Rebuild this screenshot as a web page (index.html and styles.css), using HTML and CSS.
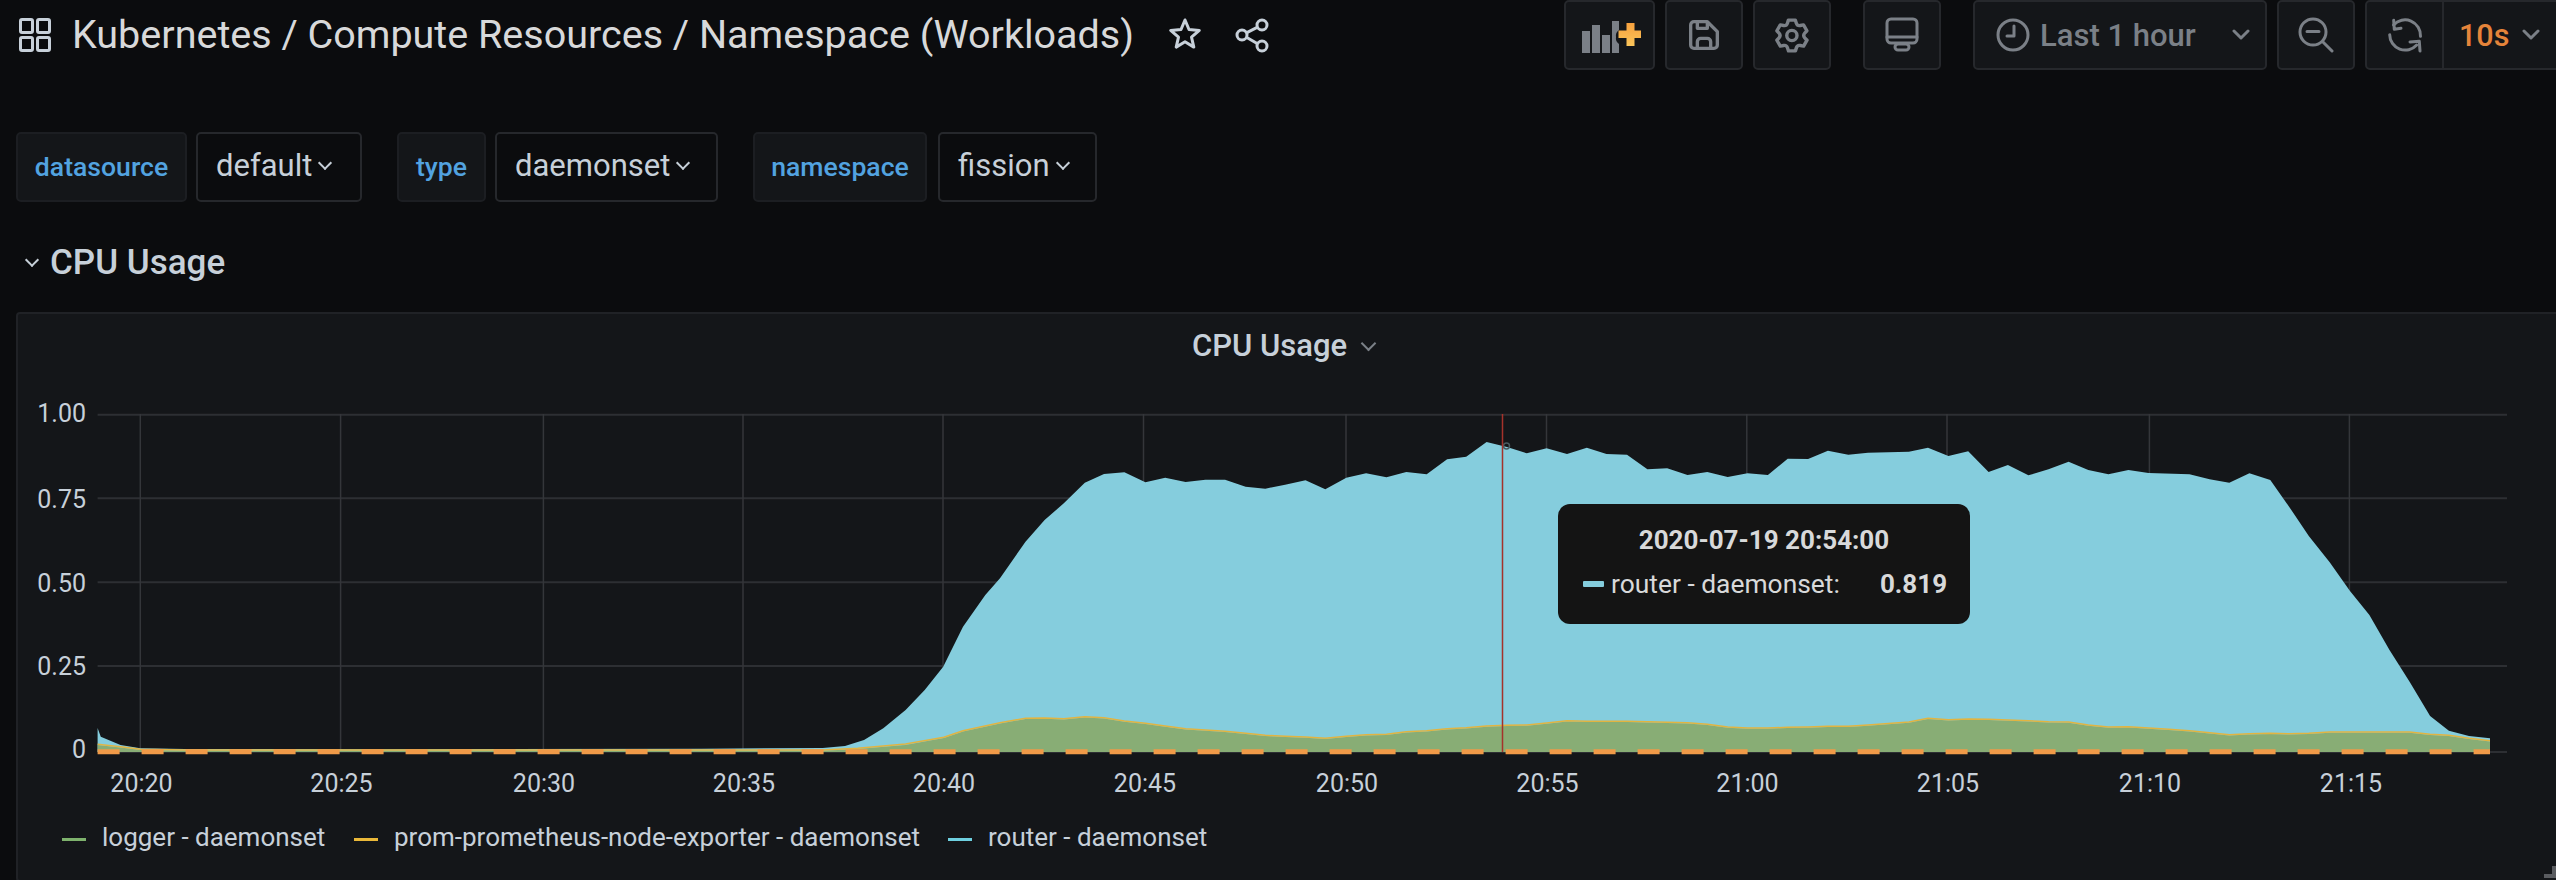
FILE: index.html
```html
<!DOCTYPE html>
<html lang="en">
<head>
    <meta charset="UTF-8">
    <title>Kubernetes / Compute Resources / Namespace (Workloads)</title>
    <link rel="stylesheet" href="styles.css">
</head>
<body>
    <header class="topbar">
        <div class="title-group">
            <svg class="icon-grid" width="34" height="36" viewBox="0 0 34 36"><rect x="2.5" y="2.5" width="12" height="13" rx="1.5"/><rect x="19.5" y="2.5" width="12" height="13" rx="1.5"/><rect x="2.5" y="20.5" width="12" height="13" rx="1.5"/><rect x="19.5" y="20.5" width="12" height="13" rx="1.5"/></svg>
            <h1 class="title">Kubernetes / Compute Resources / Namespace (Workloads)</h1>
            <svg class="icon-star" width="36" height="36" viewBox="0 0 36 36"><polygon points="18,3 22,12.5 32.3,13.4 24.5,20.1 26.8,30.1 18,24.8 9.2,30.1 11.5,20.1 3.7,13.4 14,12.5"/></svg>
            <svg class="icon-share" width="36" height="36" viewBox="0 0 36 36"><circle cx="28" cy="8" r="5"/><circle cx="8" cy="18" r="5"/><circle cx="28" cy="29" r="5"/><path d="M12.4 15.8 23.6 10.2M12.4 20.2 23.6 26.8"/></svg>
        </div>
        <div class="toolbar">
            <button class="btn btn-add" type="button">
                <svg width="62" height="36" viewBox="0 0 62 36">
                    <defs><linearGradient id="plusFill" x1="0" y1="0" x2="0" y2="1"><stop offset="0" stop-color="#f7a13e"/><stop offset="1" stop-color="#fbc55a"/></linearGradient></defs>
                    <path class="bars" d="M3 14h8v22H3zM13 8h8v28h-8zM23 18h8v18h-8zM33 4h7v9a7 7 0 0 0-3 7a7 7 0 0 0 3 7v9h-7z"/>
                    <path fill="url(#plusFill)" d="M47.500 6h8v7.500h7v7.500h-7v8h-8v-8h-8v-7.500h8z"/>
                </svg>
            </button>
            <button class="btn btn-save" type="button">
                <svg width="40" height="40" viewBox="0 0 24 24"><path d="M20.710 9.290l-6-6a1 1 0 0 0-.32-.21A1.090 1.090 0 0 0 14 3H6A3 3 0 0 0 3 6V18a3 3 0 0 0 3 3H18a3 3 0 0 0 3-3V10A1 1 0 0 0 20.710 9.290ZM9 5h4V7H9Zm6 14H9V16a1 1 0 0 1 1-1h4a1 1 0 0 1 1 1Zm4-1a1 1 0 0 1-1 1H17V16a3 3 0 0 0-3-3H10a3 3 0 0 0-3 3v3H6a1 1 0 0 1-1-1V6A1 1 0 0 1 6 5H7V8A1 1 0 0 0 8 9h6a1 1 0 0 0 1-1V6.410l4 4Z"/></svg>
            </button>
            <button class="btn btn-gear" type="button">
                <svg width="41" height="41" viewBox="0 0 24 24"><path d="M19.900 12.660a1 1 0 0 1 0-1.320L21.180 9.900a1 1 0 0 0 .12-1.170l-2-3.460a1 1 0 0 0-1.070-.48l-1.880.38a1 1 0 0 1-1.150-.66l-.61-1.830A1 1 0 0 0 13.640 2h-4a1 1 0 0 0-1 .68L8.080 4.510a1 1 0 0 1-1.150.66L5 4.790A1 1 0 0 0 4 5.270L2 8.730A1 1 0 0 0 2.100 9.900l1.270 1.440a1 1 0 0 1 0 1.320L2.100 14.100A1 1 0 0 0 2 15.270l2 3.460a1 1 0 0 0 1.070.48l1.880-.38a1 1 0 0 1 1.150.66l.61 1.830a1 1 0 0 0 1 .68h4a1 1 0 0 0 .95-.68l.61-1.830a1 1 0 0 1 1.150-.66l1.880.38a1 1 0 0 0 1.070-.48l2-3.460a1 1 0 0 0-.12-1.170ZM18.410 14l.8.9-1.280 2.220-1.180-.24a3 3 0 0 0-3.450 2L12.920 20H10.360L10 18.860a3 3 0 0 0-3.450-2l-1.180.24L4.070 14.890l.8-.9a3 3 0 0 0 0-4l-.8-.9L5.350 6.890l1.180.24a3 3 0 0 0 3.450-2L10.360 4h2.560l.38 1.140a3 3 0 0 0 3.450 2l1.180-.24 1.280 2.220-.8.9A3 3 0 0 0 18.410 14ZM11.640 8a4 4 0 1 0 4 4A4 4 0 0 0 11.640 8Zm0 6a2 2 0 1 1 2-2A2 2 0 0 1 11.640 14Z"/></svg>
            </button>
            <button class="btn btn-monitor" type="button">
                <svg class="line-icon" width="36" height="36" viewBox="0 0 36 36"><rect x="3" y="2" width="30" height="24" rx="4"/><path d="M3 20h30"/><rect x="11" y="27" width="14" height="6" rx="3"/></svg>
            </button>
            <button class="btn btn-time" type="button">
                <svg class="line-icon" width="36" height="36" viewBox="0 0 36 36"><circle cx="18" cy="18" r="15"/><path d="M19 9v10h-7"/></svg>
                <span class="time-label">Last 1 hour</span>
                <svg class="line-icon chevron-icon" width="18" height="12" viewBox="0 0 18 12"><path d="M2 2l7 7 7-7"/></svg>
            </button>
            <button class="btn btn-zoom" type="button">
                <svg class="line-icon" width="36" height="36" viewBox="0 0 36 36"><circle cx="15" cy="15" r="13"/><path d="M9 14.500h12M25 25l9 9"/></svg>
            </button>
            <div class="btn-group">
                <button class="btn-part btn-refresh" type="button">
                    <svg class="line-icon" width="36" height="36" viewBox="0 0 36 36"><path d="M6.500 8A15.500 15.500 0 0 1 33.500 19.300M2.700 17.700A15.500 15.500 0 0 0 29.700 28"/><path d="M6.700 3.300 7.300 12.300 14 11.300M33 34 32.300 24.300 23 25"/></svg>
                </button>
                <button class="btn-part btn-interval" type="button">
                    <span class="interval-label">10s</span>
                    <svg class="line-icon chevron-icon" width="18" height="12" viewBox="0 0 18 12"><path d="M2 2l7 7 7-7"/></svg>
                </button>
            </div>
        </div>
    </header>

    <div class="variables">
        <div class="variable">
            <span class="var-label var-datasource">datasource</span>
            <span class="var-value var-default">default<i class="caret"></i></span>
        </div>
        <div class="variable">
            <span class="var-label var-type">type</span>
            <span class="var-value var-daemonset">daemonset<i class="caret"></i></span>
        </div>
        <div class="variable">
            <span class="var-label var-namespace">namespace</span>
            <span class="var-value var-fission">fission<i class="caret"></i></span>
        </div>
    </div>

    <div class="row-title"><i class="caret"></i><span>CPU Usage</span></div>

    <section class="panel">
        <div class="panel-title"><span>CPU Usage</span><i class="caret caret-dim"></i></div>
        <div class="chart">
            <!-- viewBox follows page coordinates, easier to read points off the screenshot -->
            <svg class="graph" width="2540" height="428" viewBox="18 380 2540 428">
                <g class="grid-h">
                    <path d="M97.600 414.700H2507M97.600 498.300H2507M97.600 582.300H2507M97.600 666H2507M97.600 752H2507"/>
                </g>
                <g class="grid-v">
                    <path d="M140.300 414V752M340.600 414V752M543.400 414V752M743 414V752M943 414V752M1143.500 414V752M1346 414V752M1546.500 414V752M1746.800 414V752M1947 414V752M2149.400 414V752M2349.400 414V752"/>
                </g>
                <polygon class="area-router" points="97.600,752 97.600,728 100.800,736.700 120.500,745 140.300,748.300 185,749 382.700,749.300 701.500,748.700 822.700,748 845,746 864,740 883.300,728.300 905.600,710 924.700,690 943.200,666.700 963,626.700 985.300,595 1000,578.300 1025.500,541.700 1044.600,520 1063.800,503.300 1084.800,482.700 1104,474 1124.400,472.300 1145.400,482.300 1165.200,477.700 1185.600,482 1205.400,479.700 1225.100,479.700 1245.600,486.700 1265.300,488.700 1285.100,484.700 1305.500,480.300 1325.300,489.300 1346.300,477.700 1366.100,473.300 1386.500,477.300 1406.300,472 1426.700,474.300 1447.100,459.300 1466.200,456.700 1486.600,442 1507,447 1526.800,453.300 1546.600,448.300 1567,454 1586.800,447.700 1606.500,454 1627,454.700 1647.400,469.300 1667.200,468.300 1687.500,475 1707.300,472 1727.700,477 1747.500,473.300 1767.900,475 1787.700,458.700 1808.100,459 1827.900,450.700 1848.300,454.700 1868,452.700 1908.900,451.700 1928,447.700 1948.400,456 1968.200,451.300 1988.600,472 2007.900,465 2028.400,475.300 2048.500,469.300 2068.600,461.700 2088.300,470 2108.400,474.300 2128.400,470 2148.500,473 2189.500,474.300 2209.600,479.300 2229.300,482.700 2249.400,473.300 2270.300,480 2289.100,506.700 2308.800,536 2329.700,562.300 2349.800,590.700 2369.400,615 2389.500,650 2409.600,681.700 2430.100,716 2448.900,730.700 2469,736 2490,738.300 2490,752"/>
                <polygon class="area-logger" points="97.600,752 97.600,745 120.500,747.500 140.300,750 185,750.700 822.700,750.700 857.800,749 905.600,745 943.900,738 963,731.500 1000,723.500 1025.500,719 1044.600,718.700 1063.800,719.500 1084.800,717.500 1104,718.500 1124.400,721.700 1145.400,724 1165.200,726.700 1185.600,729.500 1205.400,730.700 1225.100,732 1245.600,734 1265.300,736 1285.100,737 1305.500,737.700 1325.300,739 1346.300,737 1366.100,735.500 1386.500,735 1406.300,732.500 1426.700,731.500 1447.100,729.500 1466.200,728.500 1486.600,726.700 1507,726 1526.800,725.700 1546.600,723.700 1567,721.500 1586.800,722 1606.500,722 1627,722 1647.400,722.500 1667.200,723 1687.500,723.500 1707.300,725 1727.700,727.700 1747.500,728.700 1767.900,728.700 1787.700,728 1808.100,727.700 1827.900,727 1848.300,727 1868,725.700 1908.900,722.700 1928,719 1948.400,720.500 1968.200,719.700 1988.600,720 2007.900,720.700 2028.400,721.500 2048.500,722.500 2068.600,722.700 2088.300,725.700 2108.400,727.700 2128.400,727.500 2148.500,728.700 2168.600,730 2189.500,731.500 2209.600,733.500 2229.300,735.500 2249.400,734.500 2270.300,734 2289.100,734.500 2308.800,734 2329.700,732.700 2409.600,732.700 2430.100,735 2448.900,736 2469,739 2490,741.500 2490,752"/>
                <polyline class="line-prom" points="97.600,744.300 120.500,746.700 140.300,749.300 185,750 822.700,750 857.800,748.300 905.600,744 943.900,737.300 963,730.700 1000,722.700 1025.500,718.300 1044.600,718 1063.800,718.700 1084.800,716.700 1104,717.700 1124.400,721 1145.400,723.300 1165.200,726 1185.600,728.700 1205.400,730 1225.100,731.300 1245.600,733.300 1265.300,735.300 1285.100,736.300 1305.500,737 1325.300,738.300 1346.300,736.300 1366.100,734.700 1386.500,734.300 1406.300,731.700 1426.700,730.700 1447.100,728.700 1466.200,727.700 1486.600,726 1507,725.300 1526.800,725 1546.600,723 1567,720.700 1586.800,721.300 1606.500,721.300 1627,721.300 1647.400,721.700 1667.200,722.300 1687.500,722.700 1707.300,724.300 1727.700,727 1747.500,728 1767.900,728 1787.700,727.300 1808.100,727 1827.900,726.300 1848.300,726.300 1868,725 1908.900,722 1928,718.300 1948.400,719.700 1968.200,719 1988.600,719.300 2007.900,720 2028.400,720.700 2048.500,721.700 2068.600,722 2088.300,725 2108.400,727 2128.400,726.700 2148.500,728 2168.600,729.300 2189.500,730.700 2209.600,732.700 2229.300,734.700 2249.400,733.700 2270.300,733.300 2289.100,733.700 2308.800,733.300 2329.700,732 2409.600,732 2430.100,734.300 2448.900,735.300 2469,738.300 2490,740.700"/>
                <path class="line-dash" d="M97.600 751.700H2490"/>
                <circle class="hover-point" cx="1506.500" cy="446" r="3"/>
                <path class="crosshair" d="M1502.500 414V752"/>
                <g class="axis-y">
                    <text x="86" y="413">1.00</text>
                    <text x="86" y="499">0.75</text>
                    <text x="86" y="583">0.50</text>
                    <text x="86" y="666">0.25</text>
                    <text x="86" y="749">0</text>
                </g>
                <g class="axis-x">
                    <text x="141.500" y="783">20:20</text>
                    <text x="341.500" y="783">20:25</text>
                    <text x="544" y="783">20:30</text>
                    <text x="744" y="783">20:35</text>
                    <text x="944" y="783">20:40</text>
                    <text x="1145" y="783">20:45</text>
                    <text x="1347" y="783">20:50</text>
                    <text x="1547.500" y="783">20:55</text>
                    <text x="1747.500" y="783">21:00</text>
                    <text x="1948" y="783">21:05</text>
                    <text x="2150" y="783">21:10</text>
                    <text x="2351" y="783">21:15</text>
                </g>
            </svg>
            <div class="tooltip">
                <div class="tooltip-time">2020-07-19 20:54:00</div>
                <div class="tooltip-row">
                    <i class="tooltip-swatch"></i>
                    <span class="tooltip-name">router - daemonset:</span>
                    <span class="tooltip-value">0.819</span>
                </div>
            </div>
        </div>
        <ul class="legend">
            <li class="legend-item legend-logger"><i class="legend-line legend-green"></i>logger - daemonset</li>
            <li class="legend-item legend-prom"><i class="legend-line legend-yellow"></i>prom-prometheus-node-exporter - daemonset</li>
            <li class="legend-item"><i class="legend-line legend-blue"></i>router - daemonset</li>
        </ul>
        <svg class="resize-handle" width="12" height="12" viewBox="0 0 12 12"><path d="M12 0v12H0V8h8V0z"/></svg>
    </section>
</body>
</html>
```

FILE: styles.css
```css
* {
    box-sizing: border-box;
}
html, body {
    height: 880px;
    overflow: hidden;
}
body {
    margin: 0;
    width: 2556px;
    background-color: #0b0c0e;
    font-family: Roboto, "Liberation Sans", sans-serif;
    color: #d8d9da;
}

/* top bar */
.topbar {
    display: flex;
    justify-content: space-between;
    height: 70px;
}
.title-group {
    display: flex;
    align-items: center;
    padding-left: 18px;
}
.title {
    margin: 0 33px 0 20px;
    font-size: 39.500px;
    font-weight: 400;
    line-height: 72px;
    white-space: nowrap;
    color: #d8d9da;
}
.icon-grid rect,
.icon-star polygon,
.icon-share circle,
.icon-share path {
    fill: none;
    stroke: #c7d0d9;
    stroke-width: 3;
    stroke-linejoin: round;
}
.icon-share {
    margin-left: 31px;
}
.toolbar {
    display: flex;
    margin-right: -24px;
}
.btn, .btn-group {
    display: flex;
    align-items: center;
    justify-content: center;
    height: 70px;
    width: 78px;
    margin-left: 10px;
    padding: 0;
    background: #141619;
    border: 2px solid #26282c;
    border-radius: 5px;
    font-family: inherit;
}
.btn svg path, .btn svg rect {
    fill: #7b8087;
}
.btn .line-icon path,
.btn .line-icon rect,
.btn .line-icon circle,
.btn-part .line-icon path {
    fill: none;
    stroke: #7b8087;
    stroke-width: 3;
    stroke-linecap: round;
    stroke-linejoin: round;
}
.btn-add {
    width: 91px;
}
.btn-add .bars {
    fill: #7b8087;
}
.btn-add svg path:last-child {
    fill: url(#plusFill);
}
.btn-monitor {
    margin-left: 32px;
}
.btn-time {
    width: 294px;
    margin-left: 32px;
    justify-content: flex-start;
    padding-left: 20px;
}
.time-label {
    margin: 0 36px 0 9px;
    font-size: 31px;
    font-weight: 500;
    color: #7b8087;
}
.btn-group {
    width: 215px;
    justify-content: flex-start;
}
.btn-part {
    display: flex;
    align-items: center;
    height: 100%;
    padding: 0;
    background: none;
    border: 0;
    font-family: inherit;
}
.btn-refresh {
    width: 77px;
    justify-content: center;
    border-right: 2px solid #26282c;
}
.btn-interval {
    padding-left: 15px;
}
.interval-label {
    margin-right: 13px;
    font-size: 30.500px;
    font-weight: 500;
    color: #e5843a;
}

/* template variables */
.variables {
    display: flex;
    height: 70px;
    margin-top: 62px;
    padding-left: 16px;
}
.variable {
    display: flex;
    margin-right: 35px;
}
.var-label, .var-value {
    display: flex;
    align-items: center;
    height: 70px;
    border-radius: 5px;
}
.var-label {
    justify-content: center;
    padding-bottom: 2px;
    background: #141619;
    border: 2px solid #1c1e22;
    font-size: 26.600px;
    font-weight: 500;
    color: #52a3e0;
}
.var-value {
    margin-left: 9px;
    padding: 0 0 4px 18px;
    background: #0b0c0e;
    border: 2px solid #26282c;
    font-size: 31px;
    line-height: 1;
    color: #c7d0d9;
}
.var-datasource { width: 171px; }
.var-default { width: 166px; }
.var-type { width: 89px; }
.var-daemonset { width: 223px; }
.var-namespace { width: 174px; }
.var-fission { width: 159px; margin-left: 11px; }
.caret {
    display: inline-block;
    width: 10px;
    height: 10px;
    margin: 0 0 4px 8px;
    border-right: 2.500px solid currentColor;
    border-bottom: 2.500px solid currentColor;
    transform: rotate(45deg);
}

/* row */
.row-title {
    display: flex;
    align-items: center;
    height: 40px;
    margin-top: 40px;
    padding-left: 18px;
    font-size: 35px;
    font-weight: 500;
    color: #c7d0d9;
}
.row-title .caret {
    margin: 0 13px 4px 9px;
}

/* panel */
.panel {
    position: relative;
    width: 2560px;
    height: 570px;
    margin: 30px 0 0 16px;
    background: #141619;
    border: 2px solid #202226;
    border-radius: 4px;
}
.panel-title {
    display: flex;
    align-items: center;
    height: 66px;
    padding: 0 0 4px 1174px;
    font-size: 31px;
    font-weight: 500;
    color: #c7d0d9;
}
.caret-dim {
    width: 11px;
    height: 11px;
    margin-left: 16px;
    color: #7b8087;
}
.chart {
    position: relative;
}
.graph {
    display: block;
}
.grid-h path {
    fill: none;
    stroke: #2d2f33;
    stroke-width: 2;
}
.grid-v path {
    fill: none;
    stroke: #34363a;
    stroke-width: 1.500;
}
.area-router {
    fill: #85cddd;
}
.area-logger {
    fill: #88ad75;
}
.line-prom {
    fill: none;
    stroke: #e2b440;
    stroke-width: 1.500;
}
.line-dash {
    fill: none;
    stroke: #f09a48;
    stroke-width: 5;
    stroke-dasharray: 22 22;
}
.crosshair {
    fill: none;
    stroke: #a5322b;
    stroke-width: 1.500;
}
.hover-point {
    fill: none;
    stroke: #4a5a60;
    stroke-width: 1.500;
}
.graph text {
    font-size: 25px;
    fill: #c7d0d9;
    dominant-baseline: central;
}
.axis-y text {
    text-anchor: end;
}
.axis-x text {
    text-anchor: middle;
}

/* tooltip sits over the graph */
.tooltip {
    position: absolute;
    left: 1540px;
    top: 124px;
    width: 412px;
    height: 120px;
    padding-top: 20px;
    background: #141414;
    border-radius: 12px;
    font-size: 26px;
    color: #d8d9da;
}
.tooltip-time {
    height: 32px;
    line-height: 32px;
    font-weight: 700;
    text-align: center;
}
.tooltip-row {
    display: flex;
    align-items: center;
    height: 32px;
    margin-top: 12px;
    padding-left: 25px;
}
.tooltip-swatch {
    width: 21px;
    height: 6px;
    margin-right: 7px;
    background: #85cddd;
    border-radius: 1px;
}
.tooltip-name {
    font-size: 26.400px;
}
.tooltip-value {
    margin-left: 40px;
    font-weight: 700;
}
.legend {
    display: flex;
    margin: 13px 0 0;
    padding: 0 0 0 44px;
    list-style: none;
    font-size: 26px;
    color: #c7d0d9;
}
.legend-item {
    display: flex;
    align-items: center;
    height: 32px;
}
/* fixed widths so the three entries start where they should */
.legend-logger { width: 292px; }
.legend-prom { width: 594px; }
.legend-line {
    width: 24px;
    height: 3px;
    margin: 4px 16px 0 0;
}
.legend-green { background: #7eb26d; }
.legend-yellow { background: #eab839; }
.legend-blue { background: #6ed0e0; }
.resize-handle {
    position: absolute;
    left: 2526px;
    bottom: 2px;
    fill: #5a5c60;
}
```
